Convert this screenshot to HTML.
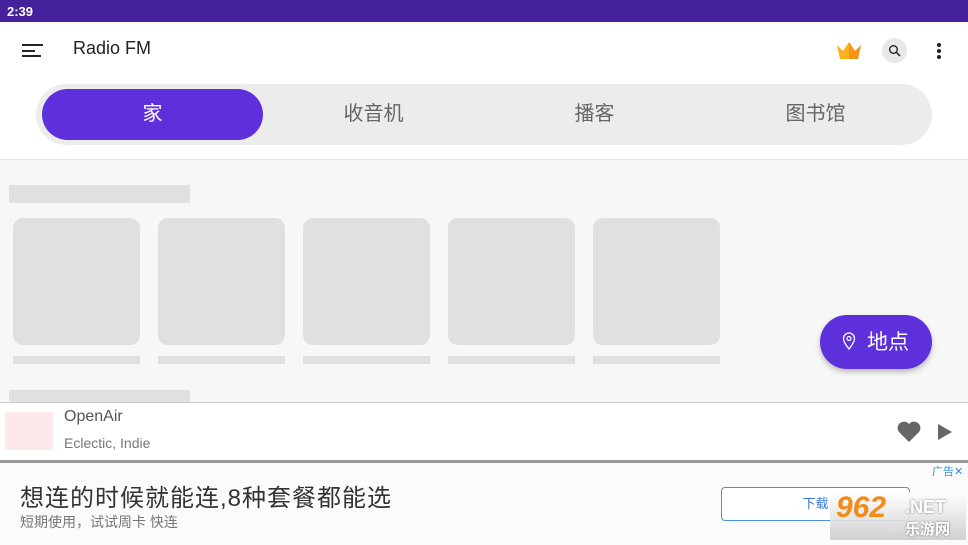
<!DOCTYPE html>
<html><head><meta charset="utf-8"><style>
*{margin:0;padding:0;box-sizing:border-box}
body{width:968px;height:545px;overflow:hidden;position:relative;background:#fff;font-family:"Liberation Sans","Noto Sans CJK SC",sans-serif}
.a{position:absolute}
.sk{position:absolute;background:#e0e0e0}
.card{position:absolute;top:218px;width:127px;height:127px;background:#e0e0e0;border-radius:10px}
.ln{position:absolute;top:356px;width:127px;height:8px;background:#e0e0e0}
</style></head><body>
<div class="a" style="left:0;top:0;width:968px;height:22px;background:#45229c;color:#fff;font-size:13px;font-weight:bold;padding:4px 0 0 7px">2:39</div>
<svg class="a" style="left:21px;top:42px" width="24" height="16"><rect x="1" y="2" width="21" height="2" fill="#222"/><rect x="1" y="8" width="13" height="2" fill="#222"/><rect x="1" y="13" width="19" height="2" fill="#222"/></svg>
<div class="a" style="left:73px;top:38px;font-size:18px;color:#222">Radio FM</div>
<svg class="a" style="left:836px;top:40px" width="26" height="20"><path d="M1 5 L7 11 L13 2 L19 11 L25 5 L22 19 H4 Z" fill="#fbb21a"/><path d="M13 2 L19 11 L25 5 L22 19 H13Z" fill="#f57f17" opacity=".6"/></svg>
<div class="a" style="left:882px;top:38px;width:25px;height:25px;border-radius:50%;background:#e8e8e8"></div>
<svg class="a" style="left:888px;top:44px" width="13" height="13"><circle cx="5.5" cy="5.5" r="3.8" stroke="#222" stroke-width="1.4" fill="none"/><path d="M8.5 8.5 L12 12" stroke="#222" stroke-width="1.5"/></svg>
<svg class="a" style="left:935px;top:42px" width="8" height="18"><circle cx="4" cy="3" r="2" fill="#222"/><circle cx="4" cy="9" r="2" fill="#222"/><circle cx="4" cy="15" r="2" fill="#222"/></svg>
<div class="a" style="left:36px;top:84px;width:896px;height:61px;background:#ececec;border-radius:31px"></div>
<div class="a" style="left:42px;top:89px;width:221px;height:51px;background:#5e30dc;border-radius:26px;color:#fff;font-size:20px;text-align:center;line-height:51px">家</div>
<div class="a" style="left:263px;top:89px;width:221px;line-height:51px;text-align:center;font-size:20px;color:#666">收音机</div>
<div class="a" style="left:484px;top:89px;width:221px;line-height:51px;text-align:center;font-size:20px;color:#666">播客</div>
<div class="a" style="left:705px;top:89px;width:221px;line-height:51px;text-align:center;font-size:20px;color:#666">图书馆</div>
<div class="a" style="left:0;top:159px;width:968px;height:244px;background:#f7f7f7;border-top:1px solid #e6e6e6"></div>
<div class="sk" style="left:9px;top:185px;width:181px;height:18px"></div>
<div class="card" style="left:13px"></div><div class="card" style="left:158px"></div><div class="card" style="left:303px"></div><div class="card" style="left:448px"></div><div class="card" style="left:593px"></div>
<div class="ln" style="left:13px"></div><div class="ln" style="left:158px"></div><div class="ln" style="left:303px"></div><div class="ln" style="left:448px"></div><div class="ln" style="left:593px"></div>
<div class="sk" style="left:9px;top:390px;width:181px;height:13px"></div>
<div class="a" style="left:820px;top:315px;width:112px;height:54px;background:#5e30dc;border-radius:27px;box-shadow:0 3px 6px rgba(0,0,0,.25)"></div>
<svg class="a" style="left:842px;top:332px" width="14" height="19"><path d="M7 17 C3 12 1.5 9 1.5 6.5 A5.5 5.5 0 0 1 12.5 6.5 C12.5 9 11 12 7 17Z" stroke="#fff" stroke-width="1.3" fill="none"/><circle cx="7" cy="6.5" r="2" stroke="#fff" stroke-width="1.2" fill="none"/></svg>
<div class="a" style="left:867px;top:326px;font-size:21px;color:#fff">地点</div>
<div class="a" style="left:0;top:402px;width:968px;height:59px;background:#fff;border-top:1px solid #ccc"></div>
<div class="a" style="left:5px;top:412px;width:48px;height:38px;background:#fde8ea"></div>
<div class="a" style="left:64px;top:408px;font-size:16px;color:#555">OpenAir</div>
<div class="a" style="left:64px;top:435px;font-size:14px;color:#777">Eclectic, Indie</div>
<svg class="a" style="left:896px;top:420px" width="26" height="23"><path d="M13 22 L3 12 A6 6 0 0 1 13 4 A6 6 0 0 1 23 12 Z" fill="#666"/></svg>
<svg class="a" style="left:937px;top:423px" width="16" height="18"><path d="M1 1 L15 9 L1 17Z" fill="#666"/></svg>
<div class="a" style="left:0;top:460px;width:968px;height:3px;background:#999"></div>
<div class="a" style="left:0;top:463px;width:968px;height:82px;background:#fbfbfb"></div>
<div class="a" style="left:20px;top:478px;font-size:24px;letter-spacing:1px;color:#333;white-space:nowrap">想连的时候就能连,8种套餐都能选</div>
<div class="a" style="left:20px;top:512px;font-size:14px;color:#777">短期使用，试试周卡 快连</div>
<div class="a" style="left:932px;top:463px;font-size:11px;color:#3a8ee0">广告✕</div>
<div class="a" style="left:721px;top:487px;width:189px;height:34px;border:1px solid #4a90d9;border-radius:4px;background:#fff;color:#3a7bd5;font-size:13px;text-align:center;line-height:32px">下载</div>
<div class="a" style="left:830px;top:492px;width:136px;height:48px;background:linear-gradient(#fff,#ccc);opacity:.9"></div>
<div class="a" style="left:836px;top:491px;font-size:30px;font-weight:bold;font-style:italic;color:#f38b1a">962</div>
<div class="a" style="left:905px;top:497px;font-size:18px;font-weight:bold;color:#fff;text-shadow:0 0 2px #777">.NET</div>
<div class="a" style="left:905px;top:518px;font-size:15px;font-weight:bold;color:#fff;text-shadow:0 0 2px #777">乐游网</div>
</body></html>
